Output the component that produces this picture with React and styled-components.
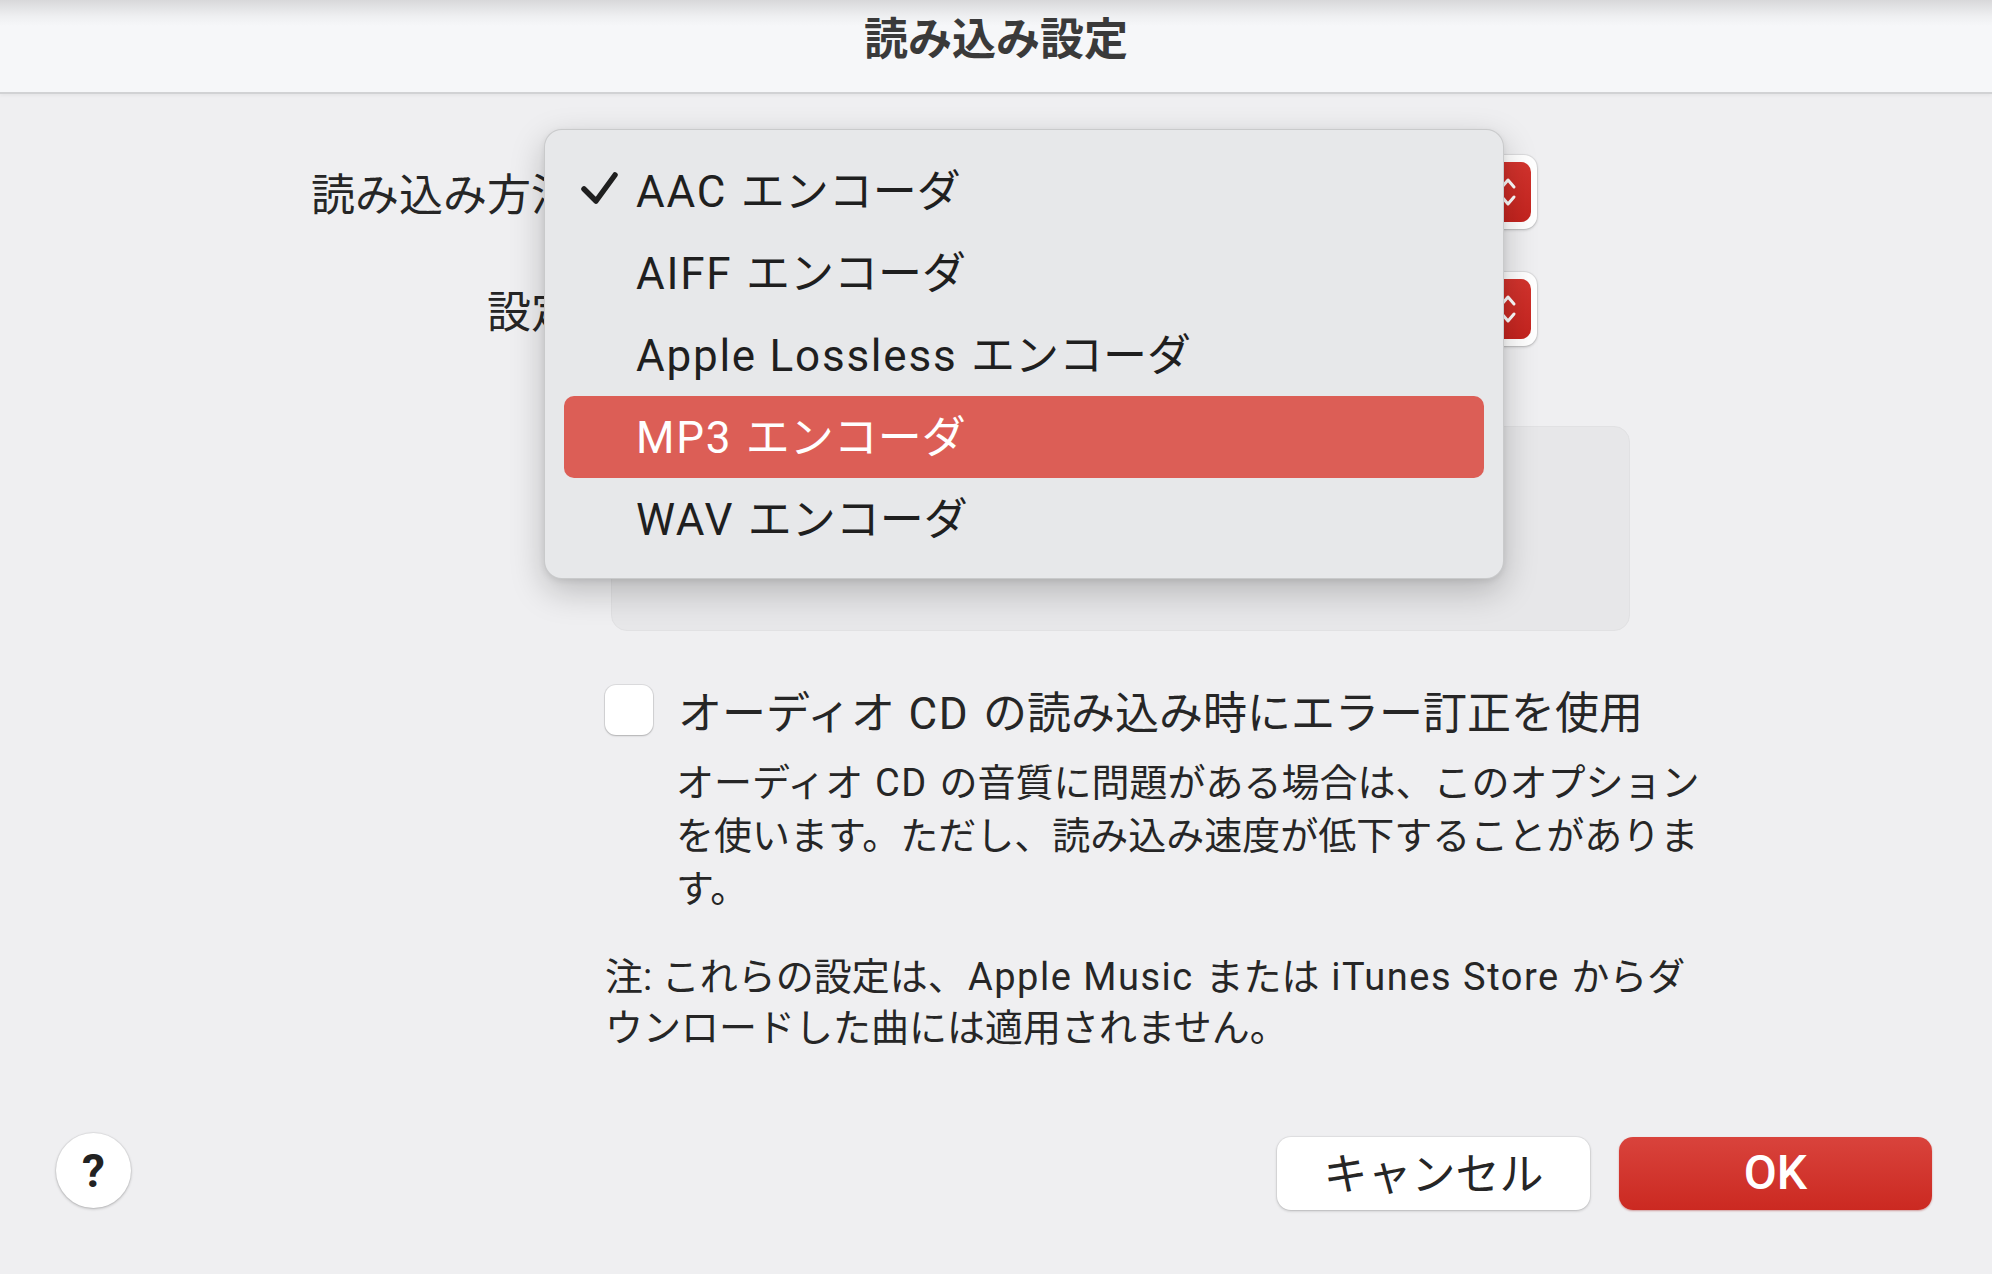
import React from "react";
import styled, { createGlobalStyle } from "styled-components";

const FONT = `Roboto, "Noto Sans CJK JP", "Noto Sans", sans-serif`;

const Global = createGlobalStyle`
  html, body {
    margin: 0;
    padding: 0;
    background: #efeff1;
  }
  body {
    font-family: ${FONT};
    color: #242424;
  }
`;

const Window = styled.div`
  width: 1992px;
  height: 1274px;
  display: flex;
  flex-direction: column;
  background: #efeff1;
  overflow: hidden;
`;

const TitleBar = styled.div`
  height: 92px;
  flex: none;
  display: flex;
  align-items: center;
  justify-content: center;
  background: linear-gradient(#d8d8da 0px, #eeeff1 16px, #f6f7f9 26px, #f6f7f9 100%);
  border-bottom: 2px solid #d1d2d4;
  box-shadow: 0 2px 3px rgba(0, 0, 0, 0.04);
`;

const Title = styled.h1`
  margin: 0;
  margin-top: -20px;
  font-size: 44px;
  font-weight: 700;
  color: #3a3a3a;
`;

/* latin runs are set a little wider, like the system font does */
const Latin = styled.span`
  letter-spacing: 0.04em;
  margin: 0 0.06em;
`;

const Body = styled.div`
  position: relative;
  flex: 1;
  display: flex;
  flex-direction: column;
  padding-top: 61px;
`;

const Row = styled.div`
  display: grid;
  grid-template-columns: 575px 1fr;
  column-gap: 30px;
  align-items: center;
  margin-top: ${(p) => p.$mt || 0}px;
`;

const Label = styled.div`
  text-align: right;
  font-size: 44px;
  white-space: nowrap;
  color: #262626;
`;

const PopupButton = styled.div`
  width: 932px;
  height: 74px;
  box-sizing: border-box;
  background: #ffffff;
  border-radius: 13px;
  box-shadow: 0 1px 3px rgba(0, 0, 0, 0.22), 0 0 0 1px rgba(0, 0, 0, 0.05);
  display: flex;
  align-items: center;
  justify-content: space-between;
  padding: 0 6px 0 24px;
  font-size: 44px;
`;

const Stepper = styled.div`
  width: 46px;
  height: 60px;
  border-radius: 10px;
  background: linear-gradient(#d2332d, #c4241f);
  display: flex;
  align-items: center;
  justify-content: center;
`;

const DetailsBox = styled.div`
  position: relative;
  margin-left: 6px;
  width: 1019px;
  height: 205px;
  box-sizing: border-box;
  background: #e7e7e9;
  border: 1px solid #e1e1e3;
  border-radius: 16px;
`;

const HiddenMark = styled.span`
  position: absolute;
  left: 888px;
  top: 46px;
  width: 4px;
  height: 22px;
  border-radius: 2px;
  background: #2a2a2a;
`;

const CheckRow = styled.label`
  display: flex;
  align-items: center;
  gap: 25px;
  height: 52px;
  font-size: 44px;
  color: #262626;
  white-space: nowrap;
`;

const CheckBox = styled.span`
  width: 48px;
  height: 50px;
  box-sizing: border-box;
  flex: none;
  background: #ffffff;
  border-radius: 11px;
  box-shadow: 0 1px 2px rgba(0, 0, 0, 0.2), 0 0 0 1px rgba(0, 0, 0, 0.08);
`;

const Paragraph = styled.p`
  margin: 0;
  margin-left: ${(p) => p.$indent || 0}px;
  font-size: 38px;
  line-height: ${(p) => p.$lh || 53}px;
  color: #262626;
  white-space: nowrap;
`;

const Footer = styled.div`
  margin-top: auto;
  padding: 0 60px 64px 56px;
  display: flex;
  align-items: center;
  justify-content: space-between;
`;

const HelpButton = styled.button`
  width: 75px;
  height: 75px;
  margin-top: -6px;
  border-radius: 50%;
  border: none;
  background: #ffffff;
  box-shadow: 0 1px 3px rgba(0, 0, 0, 0.25), 0 0 0 1px rgba(0, 0, 0, 0.04);
  font-family: ${FONT};
  font-size: 46px;
  font-weight: 700;
  color: #222;
  padding: 0;
  display: flex;
  align-items: center;
  justify-content: center;
`;

const ButtonGroup = styled.div`
  display: flex;
  gap: 29px;
`;

const DialogButton = styled.button`
  width: 313px;
  height: 73px;
  border-radius: 14px;
  border: none;
  font-family: ${FONT};
  font-size: ${(p) => (p.$primary ? 48 : 44)}px;
  padding: 0 0 ${(p) => (p.$primary ? 3 : 6)}px;
  color: ${(p) => (p.$primary ? "#ffffff" : "#262626")};
  font-weight: ${(p) => (p.$primary ? 500 : 400)};
  background: ${(p) =>
    p.$primary ? "linear-gradient(#d9433c, #cb2921)" : "#ffffff"};
  box-shadow: ${(p) =>
    p.$primary
      ? "0 1px 2px rgba(150, 0, 0, 0.35)"
      : "0 1px 3px rgba(0, 0, 0, 0.22), 0 0 0 1px rgba(0, 0, 0, 0.04)"};
`;

const Menu = styled.div`
  position: absolute;
  left: 544px;
  top: 35px;
  width: 960px;
  box-sizing: border-box;
  padding: 20px 19px 18px;
  background: #e7e8ea;
  border-radius: 18px;
  border: 1px solid rgba(0, 0, 0, 0.13);
  box-shadow: 0 12px 34px rgba(0, 0, 0, 0.22), 0 2px 6px rgba(0, 0, 0, 0.08);
`;

const MenuItem = styled.div`
  position: relative;
  height: 82px;
  display: flex;
  align-items: center;
  padding-left: 72px;
  padding-bottom: 6px;
  box-sizing: border-box;
  border-radius: 10px;
  font-size: 44px;
  white-space: nowrap;
  color: ${(p) => (p.$active ? "#ffffff" : "#1f1f1f")};
  background: ${(p) => (p.$active ? "#dc5e56" : "transparent")};
`;

const CheckMark = styled.svg`
  position: absolute;
  left: 17px;
  top: 22px;
`;

const Chevrons = () => (
  <svg width="22" height="40" viewBox="0 0 22 40" fill="none">
    <path d="M5 15 L11 8 L17 15" stroke="#fff" strokeWidth="3" strokeLinecap="round" strokeLinejoin="round" />
    <path d="M5 25 L11 32 L17 25" stroke="#fff" strokeWidth="3" strokeLinecap="round" strokeLinejoin="round" />
  </svg>
);

const encoders = ["AAC", "AIFF", "Apple Lossless", "MP3", "WAV"];

export default function App() {
  return (
    <>
      <Global />
      <Window>
        <TitleBar>
          <Title>読み込み設定</Title>
        </TitleBar>
        <Body>
          <Row>
            <Label>読み込み方法</Label>
            <PopupButton>
              <span>
                <Latin>AAC</Latin> エンコーダ
              </span>
              <Stepper>
                <Chevrons />
              </Stepper>
            </PopupButton>
          </Row>
          <Row $mt={43}>
            <Label>設定</Label>
            <PopupButton>
              <span>高品質</span>
              <Stepper>
                <Chevrons />
              </Stepper>
            </PopupButton>
          </Row>
          <Row $mt={80}>
            <span />
            <DetailsBox>
              <HiddenMark />
            </DetailsBox>
          </Row>
          <Row $mt={53}>
            <span />
            <CheckRow>
              <CheckBox />
              <span>
                オーディオ <Latin>CD</Latin> の読み込み時にエラー訂正を使用
              </span>
            </CheckRow>
          </Row>
          <Row $mt={21}>
            <span />
            <Paragraph $indent={71}>
              オーディオ <Latin>CD</Latin> の音質に問題がある場合は、このオプション
              <br />
              を使います。ただし、読み込み速度が低下することがありま
              <br />
              す。
            </Paragraph>
          </Row>
          <Row $mt={36}>
            <span />
            <Paragraph $lh={51}>
              注: これらの設定は、<Latin>Apple Music</Latin> または <Latin>iTunes Store</Latin> からダ
              <br />
              ウンロードした曲には適用されません。
            </Paragraph>
          </Row>
          <Footer>
            <HelpButton>?</HelpButton>
            <ButtonGroup>
              <DialogButton>キャンセル</DialogButton>
              <DialogButton $primary>OK</DialogButton>
            </ButtonGroup>
          </Footer>
          <Menu>
            {encoders.map((name, i) => (
              <MenuItem key={name} $active={i === 3}>
                {i === 0 && (
                  <CheckMark width="38" height="34" viewBox="0 0 38 34" fill="none">
                    <path d="M3 17 L15 29 L34 3" stroke="#1f1f1f" strokeWidth="5.5" strokeLinecap="round" strokeLinejoin="round" />
                  </CheckMark>
                )}
                <span>
                  <Latin style={{ marginLeft: 0 }}>{name}</Latin> エンコーダ
                </span>
              </MenuItem>
            ))}
          </Menu>
        </Body>
      </Window>
    </>
  );
}
